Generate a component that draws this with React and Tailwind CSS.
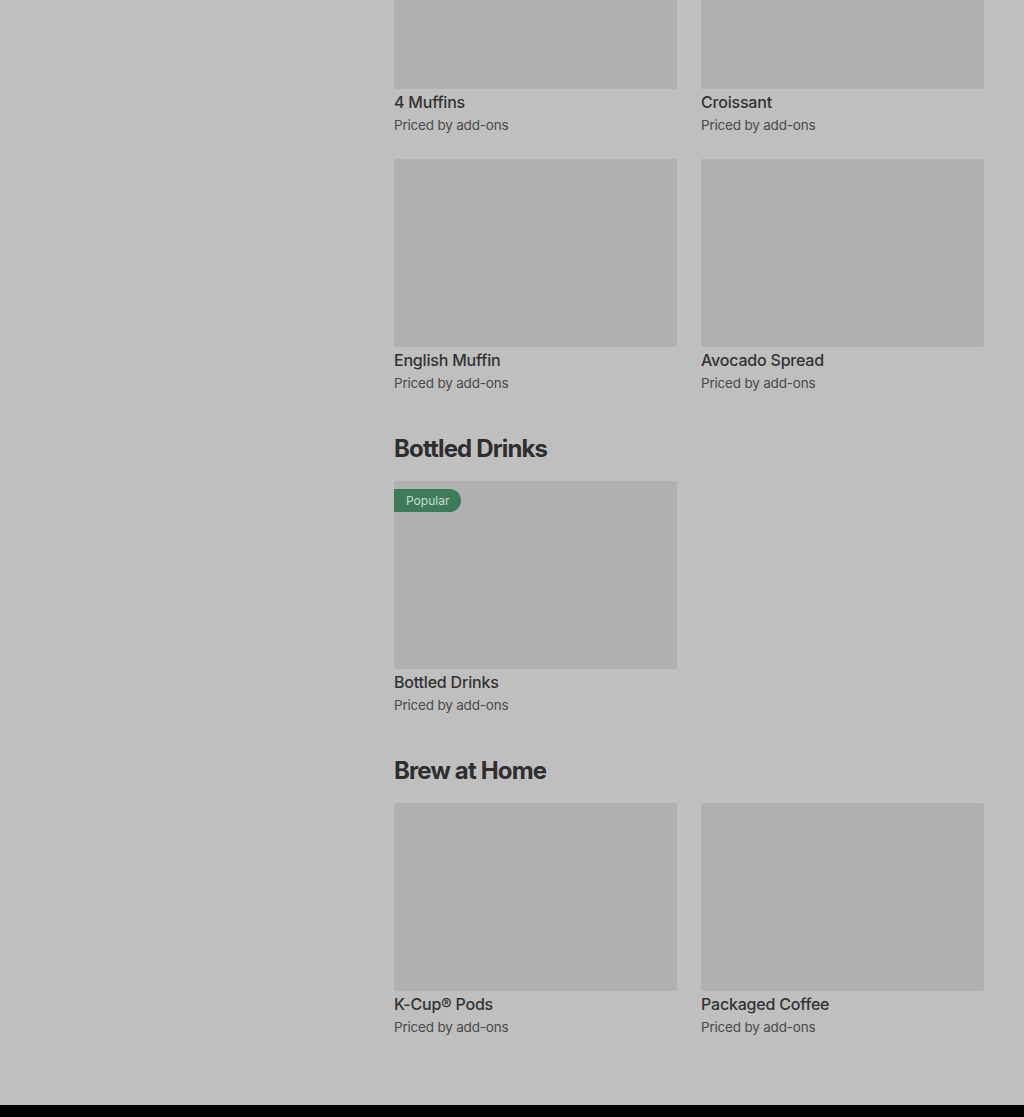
import React from "react";

function Card({ title, popular }) {
  return (
    <div className="flex flex-col">
      <div className="relative h-[188px] bg-[#b0b0b0] rounded-[2px]">
        {popular && (
          <span className="absolute left-0 top-[8px] h-[23px] px-[12px] flex items-center rounded-r-full bg-[#3e7b5c] text-[12px] text-[#c9dccf] leading-none">
            Popular
          </span>
        )}
      </div>
      <div className="mt-[3px] text-[16px] leading-[20px] font-medium tracking-[-0.2px] text-[#333333]">{title}</div>
      <div className="mt-[3px] text-[13.5px] leading-[20px] tracking-[-0.2px] text-[#4a4a4a]">Priced by add-ons</div>
    </div>
  );
}

function Section({ title, children }) {
  return (
    <section className="mt-[37px]">
      <h2 className="text-[24px] leading-[36px] pt-[1px] font-bold tracking-[-0.85px] text-[#2e2e2e]">{title}</h2>
      <div className="mt-[14px] grid grid-cols-2 gap-x-6 gap-y-6">{children}</div>
    </section>
  );
}

export default function App() {
  return (
    <div
      className="min-h-[1117px] h-[1117px] overflow-hidden bg-[#bfbfbf] flex flex-col"
      style={{ fontFamily: "Inter, 'Noto Sans', sans-serif" }}
    >
      <div className="flex-1 flex">
        <aside className="w-[394px] shrink-0" />
        <main className="w-[590px]">
          <div className="-mt-[99px] grid grid-cols-2 gap-x-6 gap-y-6">
            <Card title="4 Muffins" />
            <Card title="Croissant" />
            <Card title="English Muffin" />
            <Card title="Avocado Spread" />
          </div>
          <Section title="Bottled Drinks">
            <Card title="Bottled Drinks" popular />
          </Section>
          <Section title="Brew at Home">
            <Card title="K-Cup® Pods" />
            <Card title="Packaged Coffee" />
          </Section>
        </main>
      </div>
      <div className="h-[12px] bg-black shrink-0" />
    </div>
  );
}
